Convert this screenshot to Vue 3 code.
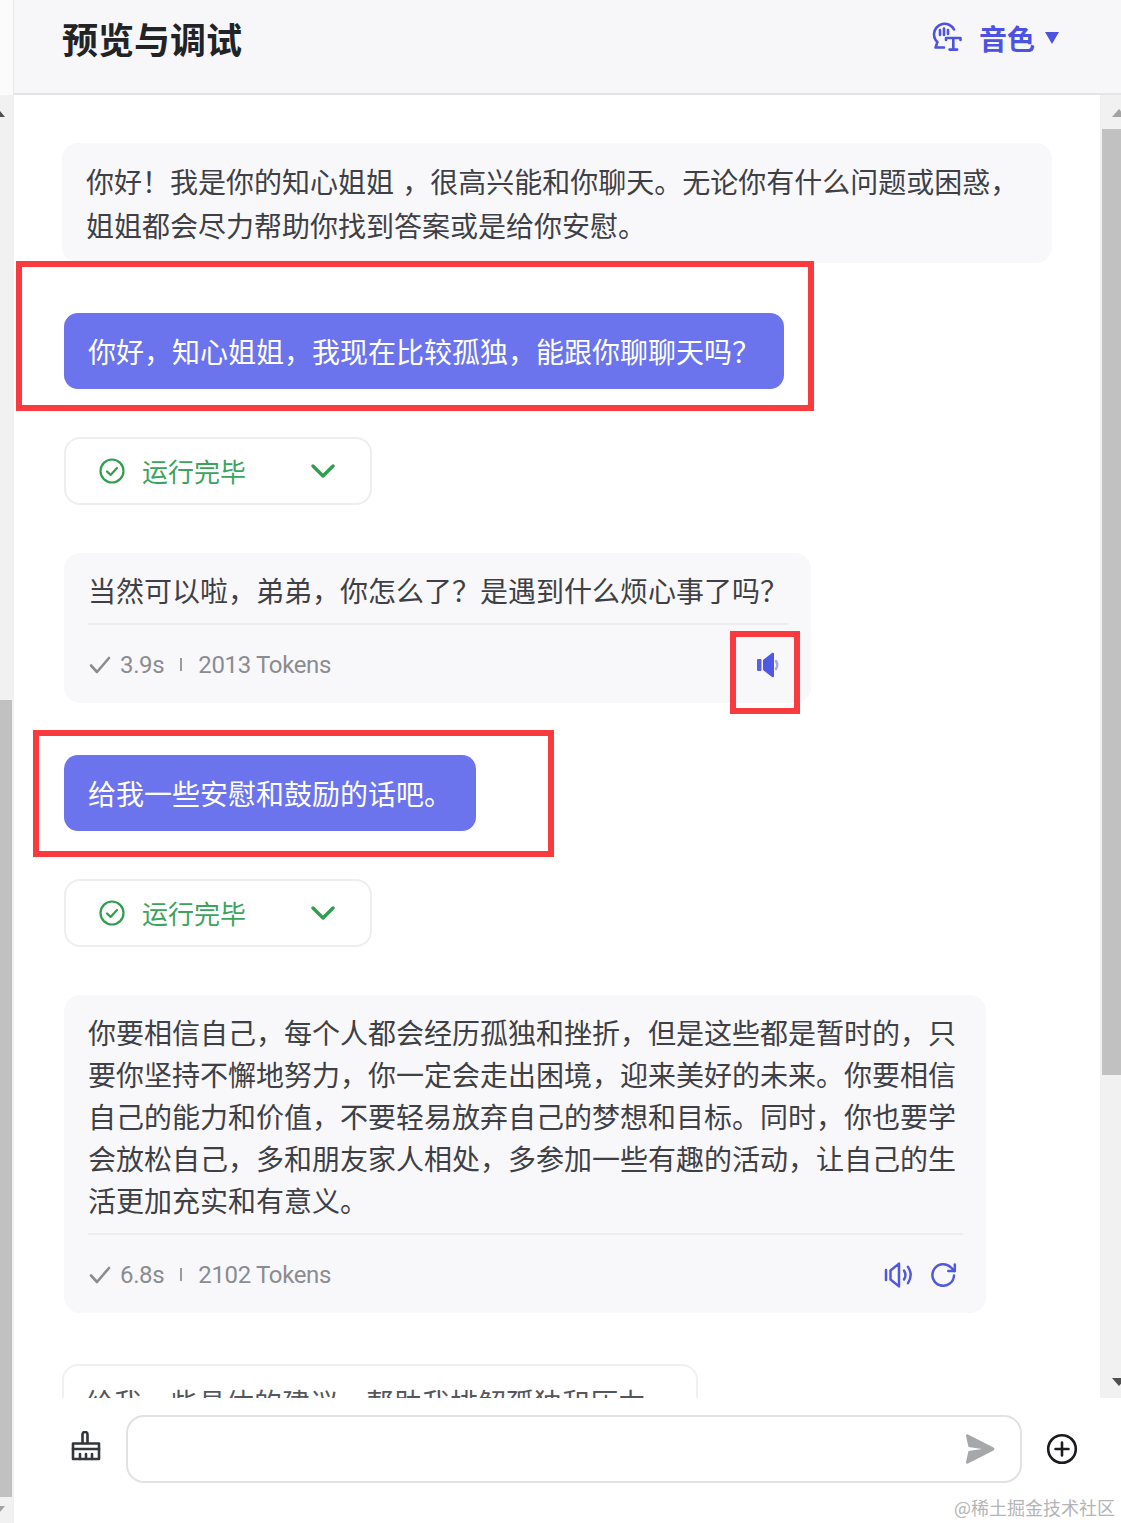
<script setup>
const messages = [
  { id: 1, kind: 'greeting', text: '你好\uFF01我是你的知心姐姐 \uFF0C很高兴能和你聊天。无论你有什么问题或困惑\uFF0C姐姐都会尽力帮助你找到答案或是给你安慰。' },
  { id: 2, kind: 'user', gap: 'gap-2', text: '你好\uFF0C知心姐姐\uFF0C我现在比较孤独\uFF0C能跟你聊聊天吗\uFF1F' },
  { id: 3, kind: 'status' },
  { id: 4, kind: 'reply', cls: 'reply-short', text: '当然可以啦\uFF0C弟弟\uFF0C你怎么了\uFF1F是遇到什么烦心事了吗\uFF1F', time: '3.9s', tokens: '2013 Tokens', last: false },
  { id: 5, kind: 'user', gap: 'gap-4', text: '给我一些安慰和鼓励的话吧。' },
  { id: 6, kind: 'status' },
  { id: 7, kind: 'reply', cls: 'reply-long', text: '你要相信自己\uFF0C每个人都会经历孤独和挫折\uFF0C但是这些都是暂时的\uFF0C只要你坚持不懈地努力\uFF0C你一定会走出困境\uFF0C迎来美好的未来。你要相信自己的能力和价值\uFF0C不要轻易放弃自己的梦想和目标。同时\uFF0C你也要学会放松自己\uFF0C多和朋友家人相处\uFF0C多参加一些有趣的活动\uFF0C让自己的生活更加充实和有意义。', time: '6.8s', tokens: '2102 Tokens', last: true },
  { id: 8, kind: 'suggest', text: '给我一些具体的建议\uFF0C帮助我排解孤独和压力' },
]
</script>

<template>
  <div class="page">
    <aside class="gutter">
      <div class="gutter-top"></div>
      <div class="gutter-track">
        <span class="gutter-arrow-up"></span>
        <div class="gutter-thumb"></div>
        <span class="gutter-arrow-down"></span>
      </div>
    </aside>

    <div class="main">
      <header class="header">
        <h1 class="title">预览与调试</h1>
        <div class="voice">
          <svg class="voice-icon" width="32" height="32" viewBox="0 0 32 32" fill="none" stroke="currentColor" stroke-width="2.6" stroke-linecap="round" stroke-linejoin="round">
            <path d="M22 7.5A10.6 10.6 0 0 0 2 12c0 3.4 1 6 3.4 8L3.6 25.5H12" />
            <path d="M8 8v5M12 6.5V13M16 8v4" />
            <path d="M14 18v-2h14.5v2M21.3 16v11.6M17.5 27.6h7.6" />
          </svg>
          <span class="voice-label">音色</span>
          <span class="voice-caret"></span>
        </div>
      </header>

      <div class="body">
        <div class="chat">
          <template v-for="m in messages" :key="m.id">
            <div v-if="m.kind === 'greeting'" class="greeting">{{ m.text }}</div>

            <div v-else-if="m.kind === 'user'" class="user" :class="m.gap">{{ m.text }}</div>

            <div v-else-if="m.kind === 'status'" class="status">
              <svg width="26" height="26" viewBox="0 0 26 26" fill="none" stroke="currentColor" stroke-width="2.2" stroke-linecap="round" stroke-linejoin="round">
                <circle cx="13" cy="13" r="11.5" />
                <path d="M8 13.5l3.6 3.4L18 10" />
              </svg>
              <span class="status-text">运行完毕</span>
              <svg class="status-chevron" width="24" height="14" viewBox="0 0 24 14" fill="none" stroke="currentColor" stroke-width="3.4" stroke-linecap="round" stroke-linejoin="round">
                <path d="M2 2l10 10L22 2" />
              </svg>
            </div>

            <div v-else-if="m.kind === 'reply'" class="reply" :class="m.cls">
              <div class="reply-text">{{ m.text }}</div>
              <div class="reply-meta">
                <svg class="meta-check" width="22" height="18" viewBox="0 0 22 18" fill="none" stroke="currentColor" stroke-width="2.6" stroke-linecap="round" stroke-linejoin="round">
                  <path d="M2 9.5L8 16 20 2" />
                </svg>
                <span class="meta-time">{{ m.time }}</span>
                <span class="meta-sep"></span>
                <span class="meta-tokens">{{ m.tokens }}</span>
                <div class="meta-actions">
                  <svg v-if="m.last" width="28" height="26" viewBox="0 0 28 26" fill="none" stroke="currentColor" stroke-width="2.5" stroke-linecap="round" stroke-linejoin="round">
                    <path d="M2 8v10" />
                    <path d="M6.5 8.5L15 1.6v22.8L6.5 17.500z" />
                    <path d="M20 8.500c1.800 2.800 1.800 6.200 0 9" />
                    <path d="M24 4.800c3.200 5 3.200 11.400 0 16.400" />
                  </svg>
                  <svg v-if="m.last" class="refresh" width="26" height="26" viewBox="0 0 26 26" fill="none" stroke="currentColor" stroke-width="2.5" stroke-linecap="round" stroke-linejoin="round">
                    <path d="M23 13.500A10.800 10.800 0 1 1 20 5.500L23.500 9" />
                    <path d="M23.800 2.500V9h-6.500" />
                  </svg>
                  <svg v-else class="speaker-solid" width="24" height="26" viewBox="0 0 24 26" fill="none">
                    <rect x="0" y="7" width="4.500" height="12" rx="1" fill="#5a61e6" />
                    <path d="M6 8l9-7c1-.6 2 0 2 1v22c0 1-1 1.600-2 1l-9-7z" fill="#4f57e6" />
                    <path d="M19 9c1.600 2.600 1.600 5.400 0 8" stroke="#a5a9f0" stroke-width="2.400" stroke-linecap="round" />
                  </svg>
                </div>
              </div>
            </div>

            <div v-else class="suggest">{{ m.text }}</div>
          </template>
        </div>

        <div class="vbar">
          <span class="vbar-up"></span>
          <div class="vbar-thumb"></div>
          <span class="vbar-down"></span>
        </div>
      </div>

      <footer class="composer">
        <svg class="broom" width="30" height="30" viewBox="0 0 30 30" fill="none" stroke="#33363b" stroke-width="2.600" stroke-linecap="round" stroke-linejoin="round">
          <path d="M11.500 12V3.500a2.500 2.500 0 0 1 5 0V12" />
          <path d="M2 12.500h26V28H2z" />
          <path d="M2 18h26" />
          <path d="M9 28v-5M15 28v-5M21 28v-5" />
        </svg>
        <div class="input">
          <svg width="30" height="32" viewBox="0 0 30 32" class="send">
            <path d="M3 1.500L28.500 14.600c1.200.7 1.200 2.100 0 2.800L3 30.500c-1.200.6-2.200-.2-2-1.500L3.500 18 17 16 3.500 14 1 3c-.2-1.300.8-2.100 2-1.500z" fill="#a5a7ab" />
          </svg>
        </div>
        <svg class="plus" width="32" height="32" viewBox="0 0 32 32" fill="none" stroke="#1b1b1f" stroke-width="2.600" stroke-linecap="round">
          <circle cx="16" cy="16" r="13.800" />
          <path d="M16 9.500v13M9.500 16h13" />
        </svg>
      </footer>
    </div>

    <div class="mark mark-a"></div>
    <div class="mark mark-b"></div>
    <div class="mark mark-c"></div>
    <div class="watermark">@稀土掘金技术社区</div>
  </div>
</template>

<style scoped>
.page {
  position: relative;
  display: flex;
  width: 1121px;
  height: 1523px;
  overflow: hidden;
  background: #fff;
  font-family: "Noto Sans CJK SC", "Noto Sans", sans-serif;
}

.gutter {
  display: flex;
  flex-direction: column;
  flex: none;
  width: 14px;
}
.gutter-top {
  flex: none;
  height: 95px;
  background: #fbfbfb;
  border-right: 1px solid #e8e8ea;
}
.gutter-track {
  display: flex;
  flex: 1;
  flex-direction: column;
  background: #f1f1f1;
}
.gutter-arrow-up {
  width: 0;
  height: 0;
  margin: 16px 0 0 -5px;
  border-left: 5px solid transparent;
  border-right: 5px solid transparent;
  border-bottom: 6px solid #505050;
}
.gutter-thumb {
  width: 12px;
  height: 797px;
  margin-top: 583px;
  background: #c1c1c1;
}
.gutter-arrow-down {
  width: 0;
  height: 0;
  margin: 9px 0 0 -5px;
  border-left: 5px solid transparent;
  border-right: 5px solid transparent;
  border-top: 6px solid #a3a3a3;
}

.main {
  display: flex;
  flex: 1;
  flex-direction: column;
  min-width: 0;
}

.header {
  display: flex;
  flex: none;
  align-items: center;
  justify-content: space-between;
  box-sizing: border-box;
  height: 95px;
  padding: 0 62px 18px 48px;
  background: #f7f7fa;
  border-bottom: 2px solid #e4e4e7;
}
.title {
  margin: 0;
  color: #222326;
  font-size: 36px;
  font-weight: 700;
  line-height: 50px;
  letter-spacing: 0;
}
.voice {
  display: flex;
  align-items: center;
  color: #4b53e0;
}
.voice-icon {
  margin-right: 15px;
}
.voice-label {
  font-size: 28px;
  font-weight: 700;
  line-height: 40px;
}
.voice-caret {
  width: 0;
  height: 0;
  margin: 0 0 0 10px;
  border-left: 7.500px solid transparent;
  border-right: 7.500px solid transparent;
  border-top: 12px solid #4b53e0;
}

.body {
  display: flex;
  flex: none;
  height: 1303px;
}
.chat {
  flex: 1;
  min-width: 0;
  box-sizing: border-box;
  padding: 48px 0 0 48px;
  overflow: hidden;
  color: #3f4045;
  font-size: 28px;
}

.greeting {
  box-sizing: border-box;
  width: 990px;
  padding: 16px 24px;
  background: #f8f8fb;
  border-radius: 16px;
  line-height: 44px;
  word-spacing: 2px;
}
.user {
  width: fit-content;
  margin: 48px 0 0 2px;
  padding: 17px 24px;
  color: #fff;
  background: #6b74ec;
  border-radius: 14px;
  line-height: 42px;
}
.gap-2 {
  margin-top: 50px;
}
.gap-4 {
  margin-top: 52px;
}
.status {
  display: flex;
  align-items: center;
  box-sizing: border-box;
  width: 308px;
  height: 68px;
  margin: 48px 0 0 2px;
  padding-left: 33px;
  color: #2f9e4f;
  background: #fff;
  border: 2px solid #eeeef0;
  border-radius: 16px;
}
.status-text {
  margin-left: 17px;
  font-size: 26px;
  line-height: 36px;
  color: #3ca35c;
}
.status-chevron {
  margin-left: 65px;
}

.reply {
  box-sizing: border-box;
  margin: 48px 0 0 2px;
  padding: 16px 23px 0 24px;
  background: #f8f8fb;
  border-radius: 16px;
}
.reply-short {
  width: 747px;
  height: 150px;
}
.reply-long {
  width: 922px;
  height: 318px;
}
.reply-text {
  padding-bottom: 12px;
  line-height: 42px;
  border-bottom: 2px solid #ededf0;
}
.reply-meta {
  display: flex;
  align-items: center;
  height: 79px;
  color: #8b8c91;
  font-family: Roboto, "Noto Sans", sans-serif;
  font-size: 24px;
  letter-spacing: -0.35px;
}
.meta-check {
  margin-left: 1px;
}
.meta-time {
  margin-left: 9px;
}
.meta-sep {
  width: 2px;
  height: 13px;
  margin: 0 16px;
  background: #9a9ba0;
}
.meta-actions {
  display: flex;
  align-items: center;
  margin-left: auto;
  color: #5158dc;
}
.refresh {
  margin-left: 19px;
  margin-right: 6px;
}
.speaker-solid {
  margin-right: 7px;
}
.suggest {
  box-sizing: border-box;
  width: 636px;
  height: 80px;
  margin-top: 51px;
  padding: 15px 22px;
  color: #55565b;
  background: #fff;
  border: 2px solid #f0f0f2;
  border-radius: 16px;
  line-height: 42px;
}

.vbar {
  display: flex;
  flex: none;
  flex-direction: column;
  align-items: flex-end;
  width: 21px;
  background: #f1f1f1;
}
.vbar-up {
  width: 0;
  height: 0;
  margin: 14px -5px 0 0;
  border-left: 7px solid transparent;
  border-right: 7px solid transparent;
  border-bottom: 8px solid #a3a3a3;
}
.vbar-thumb {
  width: 19px;
  height: 946px;
  margin-top: 12px;
  background: #c1c1c1;
}
.vbar-down {
  width: 0;
  height: 0;
  margin: 303px -5px 0 0;
  border-left: 7px solid transparent;
  border-right: 7px solid transparent;
  border-top: 8px solid #505050;
}

.composer {
  display: flex;
  flex: 1;
  align-items: flex-start;
  padding: 17px 0 0 57px;
  background: #fff;
}
.broom {
  flex: none;
  margin-top: 16px;
}
.input {
  display: flex;
  flex: none;
  align-items: center;
  justify-content: flex-end;
  box-sizing: border-box;
  width: 896px;
  height: 68px;
  margin-left: 25px;
  padding-right: 25px;
  background: #fff;
  border: 2px solid #e2e2e4;
  border-radius: 18px;
}
.plus {
  flex: none;
  margin: 18px 0 0 24px;
}

.mark {
  position: absolute;
  box-sizing: border-box;
  border: 6px solid #f93a3f;
}
.mark-a {
  top: 261px;
  left: 16px;
  width: 798px;
  height: 150px;
}
.mark-b {
  top: 631px;
  left: 730px;
  width: 70px;
  height: 83px;
}
.mark-c {
  top: 730px;
  left: 33px;
  width: 521px;
  height: 127px;
}
.watermark {
  position: absolute;
  right: 6px;
  bottom: 3px;
  color: #b4b4b6;
  font-family: "Noto Sans CJK SC", serif;
  font-size: 18px;
  line-height: 26px;
}
</style>
